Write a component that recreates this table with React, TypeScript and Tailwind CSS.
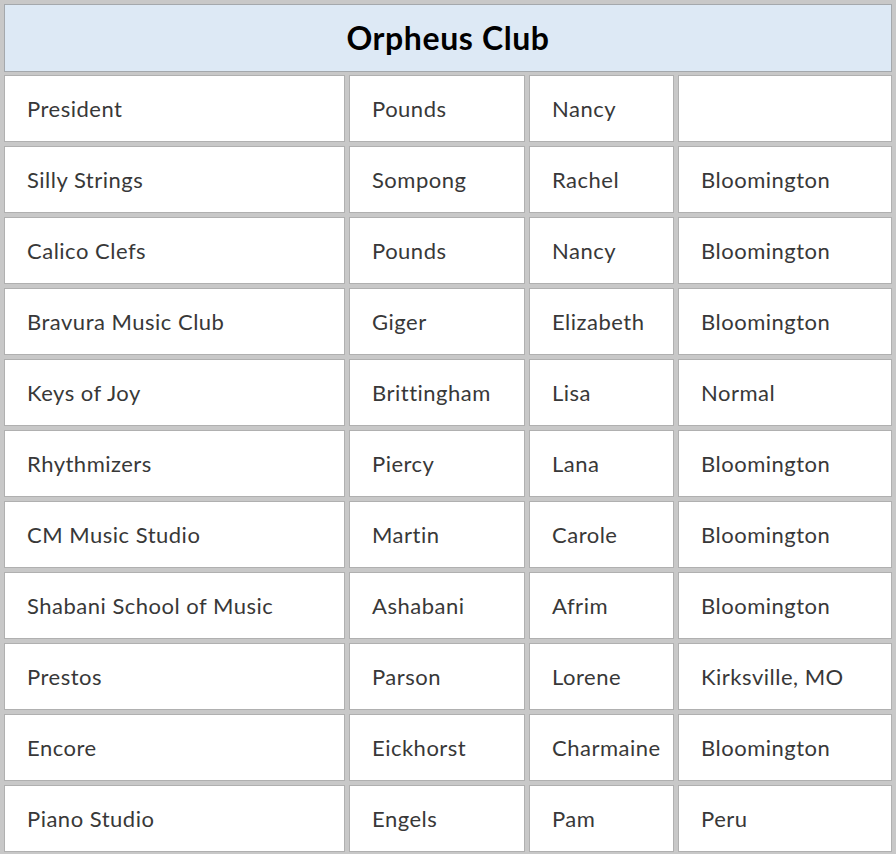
const rows: string[][] = [
  ['President', 'Pounds', 'Nancy', ''],
  ['Silly Strings', 'Sompong', 'Rachel', 'Bloomington'],
  ['Calico Clefs', 'Pounds', 'Nancy', 'Bloomington'],
  ['Bravura Music Club', 'Giger', 'Elizabeth', 'Bloomington'],
  ['Keys of Joy', 'Brittingham', 'Lisa', 'Normal'],
  ['Rhythmizers', 'Piercy', 'Lana', 'Bloomington'],
  ['CM Music Studio', 'Martin', 'Carole', 'Bloomington'],
  ['Shabani School of Music', 'Ashabani', 'Afrim', 'Bloomington'],
  ['Prestos', 'Parson', 'Lorene', 'Kirksville, MO'],
  ['Encore', 'Eickhorst', 'Charmaine', 'Bloomington'],
  ['Piano Studio', 'Engels', 'Pam', 'Peru'],
];

export default function App() {
  return (
    <div className="w-[896px] h-[854px] bg-[#c8c8c8] p-1 font-['Lato','Open_Sans',sans-serif]">
      <div className="grid grid-cols-[341px_176px_145px_214px] auto-rows-[67px] gap-1">
        {/* Header */}
        <div className="col-span-4 h-[68px] flex items-center justify-center bg-[#dde9f5] border border-[#a4a8ac]">
          <h1 className="text-[32px] font-bold tracking-[0.6px] text-black">Orpheus Club</h1>
        </div>

        {rows.map((row, i) =>
          row.map((cell, j) => (
            <div
              key={`${i}-${j}`}
              className="flex items-center pl-[22px] bg-white border border-[#b0b0b0] text-[22px] tracking-[0.5px] text-[#383838]"
            >
              {cell}
            </div>
          ))
        )}
      </div>
    </div>
  );
}
